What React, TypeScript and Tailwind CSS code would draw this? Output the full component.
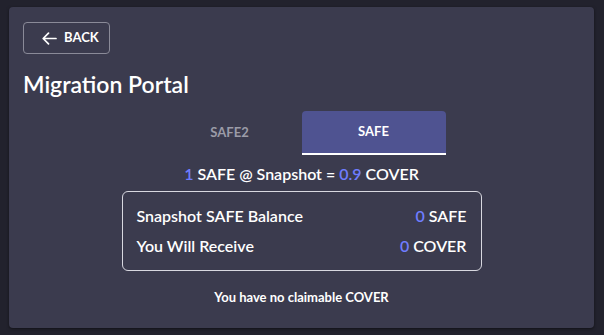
const font = { fontFamily: 'Lato, "Noto Sans", sans-serif' };

const Num = ({ children }: { children: React.ReactNode }) => (
  <span className="text-[#6f7dff]">{children}</span>
);

export default function App() {
  return (
    <div className="h-[335px] w-[604px] bg-[#22222d] pl-[9px] pt-[7px]" style={font}>
      <div className="flex h-[321px] w-[585px] flex-col rounded-[4px] bg-[#3b3b4e] px-[14px] pt-[15px] shadow-[0_1px_3px_rgba(0,0,0,0.5)]">
        <button className="flex h-[32px] w-[87px] items-center gap-[7px] rounded-[4px] border border-[#8a8a98] pl-[18px] text-[13px] font-bold text-white">
          <svg width="15" height="13" viewBox="0 0 15 13" fill="none" stroke="currentColor" strokeWidth="1.7" strokeLinecap="round" strokeLinejoin="round">
            <path d="M14 6.5H1.2M6.5 1.2L1.2 6.5l5.3 5.3" />
          </svg>
          BACK
        </button>
        <h1 className="mt-[16px] text-[23px] font-semibold leading-[28px] text-white">
          Migration Portal
        </h1>
        <div className="mt-[13px] flex justify-center">
          <div className="flex h-[44px] w-[144px] items-center justify-center text-[13px] font-bold text-[#9c9ca8]">
            SAFE2
          </div>
          <div className="flex h-[44px] w-[144px] items-center justify-center rounded-t-[4px] border-b-2 border-white bg-[#4f5391] text-[13px] font-bold text-white">
            SAFE
          </div>
        </div>
        <p className="mt-[9px] text-center text-[16px] font-semibold leading-[20px] text-white">
          <Num>1</Num> SAFE @ Snapshot = <Num>0.9</Num> COVER
        </p>
        <div className="mx-auto mt-[7px] flex h-[80px] w-[360px] flex-col justify-center gap-[10px] rounded-[6px] border border-[#d8d8e0] px-[14px] text-[16px] font-semibold leading-[20px] text-white">
          <div className="flex justify-between">
            <span>Snapshot SAFE Balance</span>
            <span>
              <Num>0</Num> SAFE
            </span>
          </div>
          <div className="flex justify-between">
            <span>You Will Receive</span>
            <span>
              <Num>0</Num> COVER
            </span>
          </div>
        </div>
        <p className="mt-[18px] text-center text-[13px] font-bold leading-[16px] text-white">
          You have no claimable COVER
        </p>
      </div>
    </div>
  );
}
